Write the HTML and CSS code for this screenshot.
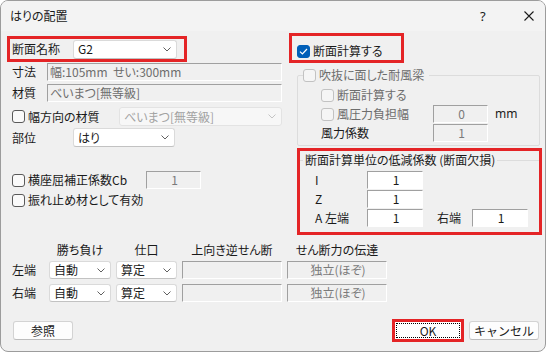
FILE: index.html
```html
<!DOCTYPE html>
<html lang="ja">
<head>
<meta charset="utf-8">
<title>はりの配置</title>
<link rel="stylesheet" href="styles.css">
</head>
<body>
<div class="window">
  <div class="titlebar">
    <span class="title">はりの配置</span>
    <span class="help">?</span>
    <svg class="close" width="10" height="10" viewBox="0 0 10 10"><path d="M0.5 0.5L9.5 9.5M9.5 0.5L0.5 9.5" stroke="#1b1b1b" stroke-width="1.1" fill="none"/></svg>
  </div>

  <div class="main">
    <!-- left side -->
    <div class="left">
      <div class="mark mark-name">
        <span class="lbl lbl-name">断面名称</span>
        <div class="combo combo-name"><span>G2</span><svg class="chev" width="8" height="5" viewBox="0 0 8 5"><path d="M0.5 0.5L4 4L7.5 0.5" stroke="#606060" fill="none"/></svg></div>
      </div>
      <div class="row row-size">
        <span class="lbl lbl-short">寸法</span>
        <div class="field static wide">幅:105mm&nbsp;&nbsp;せい:300mm</div>
      </div>
      <div class="row row-mat">
        <span class="lbl lbl-short">材質</span>
        <div class="field static wide">べいまつ[無等級]</div>
      </div>
      <div class="row row-dir">
        <label class="check check-dir"><span class="cb"></span>幅方向の材質</label>
        <div class="combo combo-off"><span>べいまつ[無等級]</span><svg class="chev" width="8" height="5" viewBox="0 0 8 5"><path d="M0.5 0.5L4 4L7.5 0.5" stroke="#c4c4c4" fill="none"/></svg></div>
      </div>
      <div class="row row-part">
        <span class="lbl lbl-name">部位</span>
        <div class="combo combo-part"><span>はり</span><svg class="chev" width="8" height="5" viewBox="0 0 8 5"><path d="M0.5 0.5L4 4L7.5 0.5" stroke="#606060" fill="none"/></svg></div>
      </div>
      <div class="row row-cb">
        <label class="check check-cb"><span class="cb"></span>横座屈補正係数Cb</label>
        <div class="field static num">1</div>
      </div>
      <div class="row row-brace">
        <label class="check"><span class="cb"></span>振れ止め材として有効</label>
      </div>
    </div>

    <!-- right side -->
    <div class="right">
      <div class="mark mark-calc">
        <label class="check"><span class="cb on"><svg width="9" height="7" viewBox="0 0 9 7"><path d="M1 3.6L3.4 6L8 1" stroke="#fff" stroke-width="1.2" fill="none"/></svg></span>断面計算する</label>
      </div>

      <fieldset class="group group-wind">
        <legend><label class="check off"><span class="cb"></span>吹抜に面した耐風梁</label></legend>
        <div class="grow">
          <label class="check off"><span class="cb"></span>断面計算する</label>
        </div>
        <div class="grow">
          <label class="check off gl"><span class="cb"></span>風圧力負担幅</label>
          <div class="field static small">0</div>
          <span class="unit">mm</span>
        </div>
        <div class="grow">
          <span class="lbl gl">風力係数</span>
          <div class="field static small">1</div>
        </div>
      </fieldset>

      <div class="mark mark-cut">
        <fieldset class="group group-cut">
          <legend>断面計算単位の低減係数 (断面欠損)</legend>
          <div class="crow">
            <span class="lbl cl">I</span>
            <div class="field edit">1</div>
          </div>
          <div class="crow">
            <span class="lbl cl">Z</span>
            <div class="field edit">1</div>
          </div>
          <div class="crow">
            <span class="lbl cl">A 左端</span>
            <div class="field edit">1</div>
            <span class="lbl cl-right">右端</span>
            <div class="field edit">1</div>
          </div>
        </fieldset>
      </div>
    </div>
  </div>

  <!-- joint table -->
  <div class="table">
    <span></span>
    <span class="head">勝ち負け</span>
    <span class="head">仕口</span>
    <span class="head">上向き逆せん断</span>
    <span class="head">せん断力の伝達</span>

    <span class="lbl">左端</span>
    <div class="combo"><span>自動</span><svg class="chev" width="8" height="5" viewBox="0 0 8 5"><path d="M0.5 0.5L4 4L7.5 0.5" stroke="#606060" fill="none"/></svg></div>
    <div class="combo"><span>算定</span><svg class="chev" width="8" height="5" viewBox="0 0 8 5"><path d="M0.5 0.5L4 4L7.5 0.5" stroke="#606060" fill="none"/></svg></div>
    <div class="field static"></div>
    <div class="field static num">独立(ほぞ)</div>

    <span class="lbl">右端</span>
    <div class="combo"><span>自動</span><svg class="chev" width="8" height="5" viewBox="0 0 8 5"><path d="M0.5 0.5L4 4L7.5 0.5" stroke="#606060" fill="none"/></svg></div>
    <div class="combo"><span>算定</span><svg class="chev" width="8" height="5" viewBox="0 0 8 5"><path d="M0.5 0.5L4 4L7.5 0.5" stroke="#606060" fill="none"/></svg></div>
    <div class="field static"></div>
    <div class="field static num">独立(ほぞ)</div>
  </div>

  <div class="buttons">
    <button class="btn btn-ref">参照</button>
    <span class="spacer"></span>
    <div class="ok"><span>OK</span></div>
    <button class="btn btn-cancel">キャンセル</button>
  </div>
</div>
</body>
</html>
```

FILE: styles.css
```css
*{
box-sizing: border-box;
}

body{
margin: 0;
background-color: #ffffff;
font-family: "Noto Sans CJK JP", "Noto Sans", sans-serif;
font-size: 12px;
line-height: 14px;
color: #1a1a1a;
font-feature-settings: "palt";
}

.window{
width: 546px;
height: 352px;
border: 1px solid #9c9c9c;
border-radius: 8px;
background-color: #f0f0f0;
overflow: hidden;
}

/* title bar */
.titlebar{
height: 30px;
background-color: #f3f3f3;
display: flex;
align-items: center;
padding-left: 9px;
}
.title{ flex: 1; }
.help{
width: 10px;
margin-right: 34px;
font-family: "Noto Sans", sans-serif;
font-size: 13px;
}
.close{ margin-right: 11px; }

/* red highlight boxes */
.mark{
border: 3px solid #e42426;
}

.main{
display: grid;
grid-template-columns: 288px 253px;
height: 204px;
}

.left{
padding: 5px 0 0 6px;
}

.row{
display: flex;
align-items: center;
padding-left: 5px;
}

.mark-name{
width: 180px;
height: 26px;
display: flex;
align-items: center;
padding-left: 2px;
}

.lbl-name{ width: 61px; }
.lbl-short{ width: 35px; }

.row-size{ margin-top: 1px; height: 18px; }
.row-mat{ margin-top: 3px; height: 18px; }
.row-dir{ margin-top: 5px; height: 19px; }
.row-part{ margin-top: 2px; height: 19px; }
.row-cb{ margin-top: 24px; height: 18px; }
.row-brace{ margin-top: 2px; height: 18px; }

/* checkboxes */
.check{
display: flex;
align-items: center;
white-space: nowrap;
}
.cb{
width: 13px;
height: 13px;
margin-right: 3px;
border: 1px solid #5a5a5a;
border-radius: 3px;
background-color: #fafafa;
display: flex;
align-items: center;
justify-content: center;
flex: none;
}
.cb.on{
background-color: #005fb8;
border-color: #005fb8;
}
.check.off{ color: #6d6d6d; }
.check.off .cb{
border-color: #c2c2c2;
background-color: #f5f5f5;
}
.check-dir{ width: 107px; }
.check-cb{ width: 134px; }

/* combo boxes */
.combo{
height: 19px;
display: flex;
align-items: center;
justify-content: space-between;
padding: 0 5px 0 4px;
background-color: #ffffff;
border: 1px solid #dadada;
border-bottom-color: #c2c2c2;
border-radius: 3px;
}
.combo-name{ width: 104px; }
.combo-part{ width: 102px; }
.combo-off{
width: 163px;
background-color: #f7f7f7;
border-color: #e3e3e3;
color: #a2a2a2;
}

/* edit fields */
.field{
height: 18px;
display: flex;
align-items: center;
padding-left: 2px;
border-top: 1px solid #a0a0a0;
border-left: 1px solid #a0a0a0;
border-right: 1px solid #ffffff;
border-bottom: 1px solid #ffffff;
white-space: nowrap;
}
.static{
background-color: #f0f0f0;
color: #6d6d6d;
}
.edit{
width: 56px;
background-color: #ffffff;
justify-content: center;
}
.wide{ width: 235px; }
.num{
width: 55px;
justify-content: center;
color: #7a7a7a;
}

/* right side */
.mark-calc{
width: 115px;
height: 30px;
margin-top: 2px;
padding: 8px 0 0 5px;
}

.group{
margin: 0;
min-width: 0;
}
.group legend{
padding: 0;
line-height: 14px;
}

.group-wind{
width: 243px;
margin: 5px 0 0 8px;
padding: 4px 0 3px 5px;
border: 1px solid #dcdcdc;
border-radius: 2px;
}
.group-wind legend{ padding-right: 5px; }

.grow{
display: flex;
align-items: center;
height: 18px;
margin-top: 1px;
padding-left: 18px;
}
.grow:first-of-type{ margin-top: 0; }
.gl{ width: 112px; }
.small{
width: 55px;
justify-content: center;
color: #7a7a7a;
}
.unit{
margin-left: 7px;
font-family: "Noto Sans", sans-serif;
}

.mark-cut{
width: 245px;
height: 87px;
margin: 2px 0 0 8px;
}
.group-cut{
margin-top: 2px;
padding: 4px 0 0 3px;
border: none;
border-top: 1px solid #dcdcdc;
}
.group-cut legend{ padding: 0 2px; }

.crow{
display: flex;
align-items: center;
height: 18px;
margin-top: 1px;
padding-left: 12px;
}
.crow:first-of-type{ margin-top: 0; }
.cl{ width: 52px; }
.cl-right{
width: 35px;
margin-left: 14px;
}

/* joint table */
.table{
display: grid;
grid-template-columns: 32px 62px 61px 100px 100px;
grid-template-rows: 13px 18px 18px;
gap: 5px;
padding-left: 11px;
margin-top: 8px;
align-items: center;
}
.table .combo{ height: 18px; }
.table .field{ height: 18px; }
.table .num{ width: 100px; }
.head{
text-align: center;
line-height: 13px;
}

/* buttons */
.buttons{
display: flex;
align-items: center;
height: 23px;
margin-top: 17px;
padding: 0 6px 0 12px;
}
.spacer{ flex: 1; }
.btn{
height: 19px;
padding: 0;
font-family: inherit;
font-size: 12px;
color: #1a1a1a;
background-color: #fdfdfd;
border: 1px solid #d3d3d3;
border-bottom-color: #bdbdbd;
border-radius: 3px;
}
.btn-ref{ width: 60px; }
.btn-cancel{
width: 70px;
margin-left: 5px;
}
.ok{
width: 72px;
height: 23px;
border: 3px solid #e42426;
background-color: #ffffff;
padding: 1px;
}
.ok span{
display: flex;
height: 100%;
align-items: center;
justify-content: center;
border: 1px dotted #000000;
}
```
